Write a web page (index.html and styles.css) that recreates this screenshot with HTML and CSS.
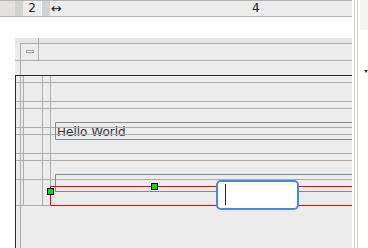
FILE: index.html
```html
<!DOCTYPE html>
<html lang="en">
<head>
    <meta charset="UTF-8">
    <title>Form Designer</title>
    <link rel="stylesheet" href="styles.css">
</head>
<body>
    <div class="app">
        <div class="designer">
            <div class="ruler">
                <div class="cell corner"></div>
                <div class="cell shade"></div>
                <div class="cell num">2</div>
                <div class="cell shade"></div>
                <div class="cell wide">
                    <span class="resize">&#8596;</span>
                    <span class="num4">4</span>
                </div>
            </div>
            <div class="gap"></div>
            <div class="canvas">
                <svg class="grid" width="337" height="210" viewBox="15 38 337 210">
                    <rect x="15" y="38" width="337" height="5" fill="#e6e6e6"/>
                    <text class="hello" x="57" y="136">Hello World</text>
                    <g stroke="#acacac" stroke-width="1" fill="none">
                        <path d="M20 43.5H352 M38.5 38V60 M20.5 43V248 M15 60.5H352"/>
                        <path d="M23.5 75V205 M42.5 75V205 M50.5 75V205"/>
                        <path d="M15 82.5H352 M15 101.5H352 M15 108.5H352 M15 127.5H352 M15 134.5H352"/>
                        <path d="M15 153.5H352 M15 160.5H352 M15 179.5H352 M15 205.5H50"/>
                    </g>
                    <rect x="26.5" y="50.5" width="7" height="2" fill="#fff" stroke="#999"/>
                    <path d="M15 75.5H352 M15.5 75V248" stroke="#2b2b2b" fill="none"/>
                    <path d="M352 122.5H55.5V139.5H352 M352 174.5H55.5V191.5H352" stroke="#7d8995" fill="none"/>
                    <path d="M352 186.5H50.5V205.5H352" stroke="#ff0000" fill="none"/>
                    <rect x="47.5" y="188.5" width="6" height="6" fill="#00e600" stroke="#000"/>
                    <rect x="151.5" y="183.5" width="6" height="6" fill="#00e600" stroke="#000"/>
                </svg>
                <div class="editor"><span class="caret"></span></div>
            </div>
        </div>
        <div class="split"></div>
        <div class="panel">
            <div class="panel-head"></div>
            <div class="arrow"></div>
        </div>
    </div>
</body>
</html>
```

FILE: styles.css
```css
body {
    margin: 0;
    background: #fff;
    font-family: "DejaVu Sans", sans-serif;
    overflow: hidden;
}
.app {
    display: flex;
    width: 368px;
    height: 248px;
}
.designer {
    width: 352px;
    display: flex;
    flex-direction: column;
}
.ruler {
    display: flex;
    height: 17px;
    box-sizing: border-box;
    border-top: 1px solid #b4b4b4;
    border-bottom: 1px solid #b4b4b4;
    background: #ececec;
    font-size: 12px;
    color: #222;
}
.ruler .cell {
    height: 100%;
}
.corner {
    width: 15px;
    background: #e3e0e0;
}
.shade {
    width: 8px;
    background: #d2d2d2;
}
.num {
    width: 19px;
    text-align: center;
    line-height: 15px;
    border-right: 1px solid #f6f6f6;
    box-sizing: border-box;
}
.wide {
    flex: 1;
    display: flex;
    align-items: center;
    line-height: 15px;
}
.resize {
    margin-left: 1px;
    font-size: 13px;
}
.num4 {
    margin-left: 190px;
}
.gap {
    height: 21px;
}
.canvas {
    position: relative;
    margin-left: 15px;
    width: 337px;
    height: 210px;
    background: #ececec;
    overflow: hidden;
}
.grid {
    display: block;
}
.hello {
    font-family: "DejaVu Sans", sans-serif;
    font-size: 12px;
    fill: #333;
}
.editor {
    position: absolute;
    left: 201px;
    top: 142px;
    width: 83px;
    height: 30px;
    box-sizing: border-box;
    border: 2px solid #428ae2;
    border-radius: 5px;
    background: #fff;
}
.caret {
    position: absolute;
    left: 7px;
    top: 2px;
    width: 1px;
    height: 21px;
    background: #222;
}
.split {
    width: 4px;
    margin-left: 2px;
    box-sizing: border-box;
    border-left: 1px solid #d6d2ca;
    border-right: 1px solid #d6d2ca;
}
.panel {
    flex: 1;
    padding-left: 2px;
}
.panel-head {
    height: 30px;
    background: #f4f4f4;
}
.arrow {
    width: 0;
    height: 0;
    margin: 40px 0 0 4px;
    border-left: 2px solid transparent;
    border-right: 2px solid transparent;
    border-top: 3px solid #333;
}
```
